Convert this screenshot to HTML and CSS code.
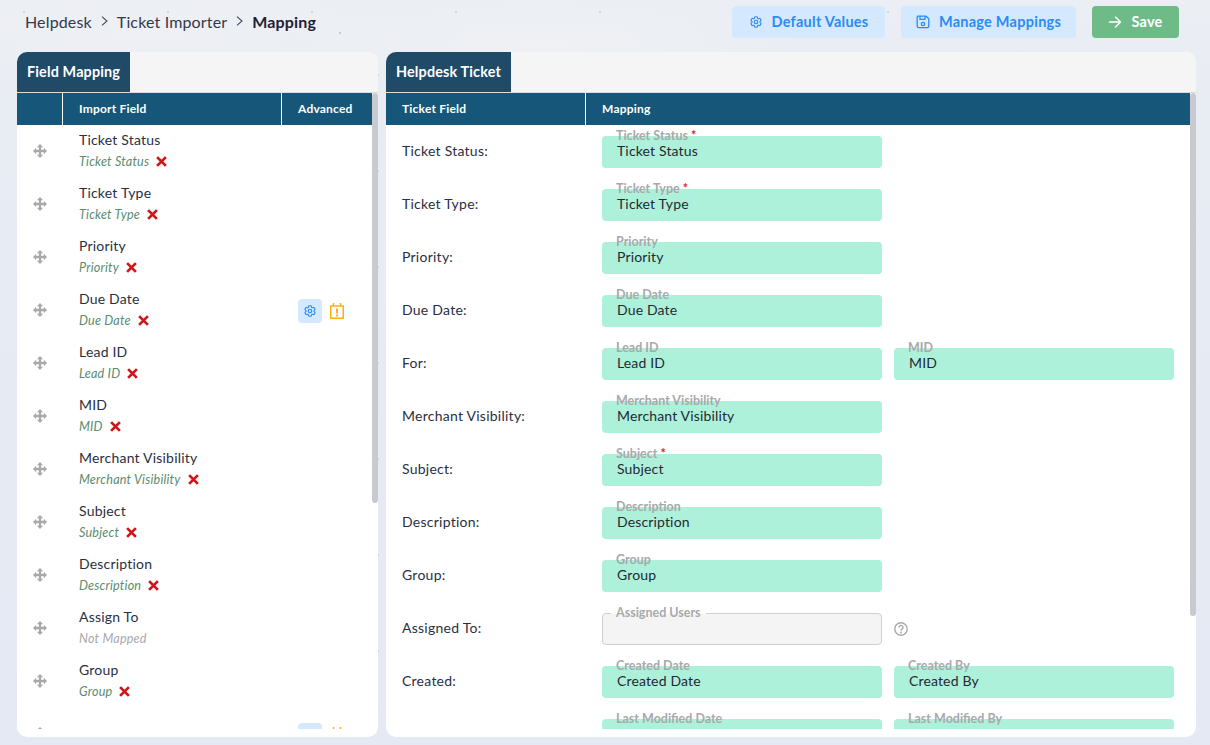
FILE: index.html
```html
<!DOCTYPE html>
<html lang="en">
<head>
<meta charset="utf-8">
<title>Mapping</title>
<link rel="stylesheet" href="styles.css">
</head>
<body>
<svg class="defs" width="0" height="0" aria-hidden="true">
  <symbol id="gear" viewBox="0 0 24 24"><path fill="none" stroke="currentColor" stroke-width="2" d="M9.594 3.94c.09-.542.56-.94 1.11-.94h2.593c.55 0 1.02.398 1.11.94l.213 1.281c.063.374.313.686.645.87.074.04.147.083.22.127.325.196.72.257 1.075.124l1.217-.456a1.125 1.125 0 0 1 1.37.49l1.296 2.247a1.125 1.125 0 0 1-.26 1.431l-1.003.827c-.293.241-.438.613-.43.992a7.723 7.723 0 0 1 0 .255c-.008.378.137.75.43.991l1.004.827c.424.35.534.955.26 1.43l-1.298 2.247a1.125 1.125 0 0 1-1.369.491l-1.217-.456c-.355-.133-.75-.072-1.076.124a6.47 6.47 0 0 1-.22.128c-.331.183-.581.495-.644.869l-.213 1.281c-.09.543-.56.94-1.11.94h-2.594c-.55 0-1.019-.398-1.11-.94l-.213-1.281c-.062-.374-.312-.686-.644-.87a6.52 6.52 0 0 1-.22-.127c-.325-.196-.72-.257-1.076-.124l-1.217.456a1.125 1.125 0 0 1-1.369-.49l-1.297-2.247a1.125 1.125 0 0 1 .26-1.431l1.004-.827c.292-.24.437-.613.43-.991a6.932 6.932 0 0 1 0-.255c.007-.38-.138-.751-.43-.992l-1.004-.827a1.125 1.125 0 0 1-.26-1.43l1.297-2.247a1.125 1.125 0 0 1 1.37-.491l1.216.456c.356.133.751.072 1.076-.124.072-.044.146-.086.22-.128.332-.183.582-.495.644-.869l.214-1.28Z"/><circle cx="12" cy="12" r="3" fill="none" stroke="currentColor" stroke-width="2"/></symbol>
  <symbol id="floppy" viewBox="0 0 14 14"><path fill="none" stroke="currentColor" stroke-width="1.3" d="M2 1.2h8l2.8 2.600v7.400a1.400 1.400 0 0 1-1.400 1.400H2.600a1.400 1.400 0 0 1-1.400-1.400V2a.8.8 0 0 1 .8-.8zM4 1.400v3h5v-3"/><circle cx="7" cy="9" r="1.700" fill="none" stroke="currentColor" stroke-width="1.300"/></symbol>
  <symbol id="arrow" viewBox="0 0 14 14"><path fill="none" stroke="currentColor" stroke-width="1.400" stroke-linecap="round" stroke-linejoin="round" d="M1.500 7h11M7.500 2l5 5-5 5"/></symbol>
  <symbol id="move" viewBox="0 0 16 16"><path fill="currentColor" d="M8 0l3.600 3.600H9.300v3.100h3.100V4.400L16 8l-3.600 3.600V9.300H9.300v3.100h2.300L8 16l-3.600-3.600h2.300V9.300H3.600v2.300L0 8l3.600-3.600v2.300h3.100V3.600H4.400z"/></symbol>
  <symbol id="cross" viewBox="0 0 10 10"><path fill="none" stroke="currentColor" stroke-width="2.500" d="M1 1l8 8M9 1L1 9"/></symbol>
  <symbol id="cal" viewBox="0 0 14 16"><path fill="none" stroke="currentColor" stroke-width="1.500" d="M.75 3h12.500v12.250H.75zM3.500 0v3M10.500 0v3"/><path fill="currentColor" d="M6 5.500h2v5H6zM6 11.500h2v2H6z"/></symbol>
  <symbol id="help" viewBox="0 0 14 14"><circle cx="7" cy="7" r="6.200" fill="none" stroke="currentColor" stroke-width="1.400"/><path fill="none" stroke="currentColor" stroke-width="1.400" d="M5 5.400a2 2 0 1 1 3 1.700c-.7.4-1 .8-1 1.600"/><circle cx="7" cy="10.500" r=".9" fill="currentColor"/></symbol>
  <symbol id="chev" viewBox="0 0 7 10"><path fill="none" stroke="currentColor" stroke-width="1.100" d="M1 .7L6 5 1 9.300"/></symbol>
</svg>

<header class="topbar">
  <nav class="crumbs">
    <span>Helpdesk</span><svg class="sep"><use href="#chev"/></svg><span>Ticket Importer</span><svg class="sep"><use href="#chev"/></svg><strong>Mapping</strong>
  </nav>
  <div class="actions">
    <button class="btn btn-soft btn-defaults"><svg class="btn-icon"><use href="#gear"/></svg>Default Values</button>
    <button class="btn btn-soft btn-manage"><svg class="btn-icon"><use href="#floppy"/></svg>Manage Mappings</button>
    <button class="btn btn-save"><svg class="btn-icon"><use href="#arrow"/></svg>Save</button>
  </div>
</header>

<main class="workspace">
  <section class="panel panel-left">
    <div class="tabstrip"><div class="tab">Field Mapping</div></div>
    <div class="panel-body">
      <div class="scroller">
        <div class="thead">
          <div class="th th-drag"></div>
          <div class="th th-import">Import Field</div>
          <div class="th th-adv">Advanced</div>
        </div>
        <div class="frow"><svg class="drag"><use href="#move"/></svg><div class="fcell"><div class="fname">Ticket Status</div><div class="fsub"><em>Ticket Status</em><svg class="x"><use href="#cross"/></svg></div></div></div>
        <div class="frow"><svg class="drag"><use href="#move"/></svg><div class="fcell"><div class="fname">Ticket Type</div><div class="fsub"><em>Ticket Type</em><svg class="x"><use href="#cross"/></svg></div></div></div>
        <div class="frow"><svg class="drag"><use href="#move"/></svg><div class="fcell"><div class="fname">Priority</div><div class="fsub"><em>Priority</em><svg class="x"><use href="#cross"/></svg></div></div></div>
        <div class="frow"><svg class="drag"><use href="#move"/></svg><div class="fcell"><div class="fname">Due Date</div><div class="fsub"><em>Due Date</em><svg class="x"><use href="#cross"/></svg></div></div><div class="advcell"><span class="gearbtn"><svg class="gearicon"><use href="#gear"/></svg></span><svg class="calicon"><use href="#cal"/></svg></div></div>
        <div class="frow"><svg class="drag"><use href="#move"/></svg><div class="fcell"><div class="fname">Lead ID</div><div class="fsub"><em>Lead ID</em><svg class="x"><use href="#cross"/></svg></div></div></div>
        <div class="frow"><svg class="drag"><use href="#move"/></svg><div class="fcell"><div class="fname">MID</div><div class="fsub"><em>MID</em><svg class="x"><use href="#cross"/></svg></div></div></div>
        <div class="frow"><svg class="drag"><use href="#move"/></svg><div class="fcell"><div class="fname">Merchant Visibility</div><div class="fsub"><em>Merchant Visibility</em><svg class="x"><use href="#cross"/></svg></div></div></div>
        <div class="frow"><svg class="drag"><use href="#move"/></svg><div class="fcell"><div class="fname">Subject</div><div class="fsub"><em>Subject</em><svg class="x"><use href="#cross"/></svg></div></div></div>
        <div class="frow"><svg class="drag"><use href="#move"/></svg><div class="fcell"><div class="fname">Description</div><div class="fsub"><em>Description</em><svg class="x"><use href="#cross"/></svg></div></div></div>
        <div class="frow"><svg class="drag"><use href="#move"/></svg><div class="fcell"><div class="fname">Assign To</div><div class="fsub fsub-none"><em>Not Mapped</em></div></div></div>
        <div class="frow"><svg class="drag"><use href="#move"/></svg><div class="fcell"><div class="fname">Group</div><div class="fsub"><em>Group</em><svg class="x"><use href="#cross"/></svg></div></div></div>
        <div class="frow"><svg class="drag"><use href="#move"/></svg><div class="fcell"><div class="fname">Created By</div></div><div class="advcell"><span class="gearbtn"><svg class="gearicon"><use href="#gear"/></svg></span><svg class="calicon"><use href="#cal"/></svg></div></div>
      </div>
      <div class="rail"><div class="thumb thumb-left"></div></div>
    </div>
  </section>

  <section class="panel panel-right">
    <div class="tabstrip"><div class="tab">Helpdesk Ticket</div></div>
    <div class="panel-body">
      <div class="scroller">
        <div class="thead">
          <div class="th th-ticket">Ticket Field</div>
          <div class="th th-mapping">Mapping</div>
        </div>
        <div class="mrow"><div class="mlabel">Ticket Status:</div><div class="chip"><span class="float">Ticket Status <i>*</i></span>Ticket Status</div></div>
        <div class="mrow"><div class="mlabel">Ticket Type:</div><div class="chip"><span class="float">Ticket Type <i>*</i></span>Ticket Type</div></div>
        <div class="mrow"><div class="mlabel">Priority:</div><div class="chip"><span class="float">Priority</span>Priority</div></div>
        <div class="mrow"><div class="mlabel">Due Date:</div><div class="chip"><span class="float">Due Date</span>Due Date</div></div>
        <div class="mrow"><div class="mlabel">For:</div><div class="chip"><span class="float">Lead ID</span>Lead ID</div><div class="chip"><span class="float">MID</span>MID</div></div>
        <div class="mrow"><div class="mlabel">Merchant Visibility:</div><div class="chip"><span class="float">Merchant Visibility</span>Merchant Visibility</div></div>
        <div class="mrow"><div class="mlabel">Subject:</div><div class="chip"><span class="float">Subject <i>*</i></span>Subject</div></div>
        <div class="mrow"><div class="mlabel">Description:</div><div class="chip"><span class="float">Description</span>Description</div></div>
        <div class="mrow"><div class="mlabel">Group:</div><div class="chip"><span class="float">Group</span>Group</div></div>
        <div class="mrow"><div class="mlabel">Assigned To:</div><div class="chip chip-empty"><span class="float float-notch">Assigned Users</span></div><svg class="help"><use href="#help"/></svg></div>
        <div class="mrow"><div class="mlabel">Created:</div><div class="chip"><span class="float">Created Date</span>Created Date</div><div class="chip"><span class="float">Created By</span>Created By</div></div>
        <div class="mrow"><div class="chip chip-first"><span class="float">Last Modified Date</span></div><div class="chip"><span class="float">Last Modified By</span></div></div>
      </div>
      <div class="rail"><div class="thumb thumb-right"></div></div>
    </div>
  </section>
</main>
</body>
</html>
```
FILE: styles.css
```css
* { box-sizing: border-box; }
html, body { margin: 0; height: 100%; }
body {
  width: 1210px;
  height: 745px;
  overflow: hidden;
  font-family: "Lato", "Noto Sans", sans-serif;
  font-size: 14px;
  letter-spacing: 0.15px;
  color: #1f2433;
  background-color: #e8ecf3;
  background-image:
    radial-gradient(circle at 340px 33px, #bfc3cb 0, #bfc3cb 0.6px, rgba(191,195,203,0) 1.3px),
    radial-gradient(circle at 24px 12px, #c8ccd3 0, #c8ccd3 0.5px, rgba(200,204,211,0) 1.2px),
    radial-gradient(circle at 90px 75px, #ccd0d7 0, #ccd0d7 0.5px, rgba(204,208,215,0) 1.2px),
    radial-gradient(ellipse 260px 50px at 45% 6%, #eff1f4 0, rgba(239,241,244,0) 100%),
    radial-gradient(ellipse 300px 60px at 12% 4%, #eef0f4 0, rgba(238,240,244,0) 100%),
    linear-gradient(#ebeef3 0, #e8ecf3 120px, #e4e9f3 745px);
  background-size: 400px 160px, 144px 96px, 144px 96px, auto, auto, auto;
}
.defs { position: absolute; }

.topbar {
  height: 52px;
  display: flex;
  align-items: flex-start;
  justify-content: space-between;
  padding: 6px 31px 0 25px;
}
.crumbs {
  display: flex;
  align-items: center;
  height: 30px;
  font-size: 16px;
  letter-spacing: 0.15px;
  color: #33394a;
}
.crumbs strong { font-weight: 700; color: #1d2233; }
.sep { width: 7px; height: 10px; margin: 0 9px 0 9px; color: #444a5a; flex: none; }
.actions { display: flex; gap: 16px; }
.btn {
  height: 32px;
  border: 0;
  border-radius: 4px;
  display: flex;
  align-items: center;
  justify-content: center;
  font: 700 14.500px "Lato", sans-serif;
  letter-spacing: 0.25px;
  padding: 0 0 1px;
}
.btn-soft { background: #d4e9ff; color: #2a8bf5; }
.btn-defaults { width: 153px; }
.btn-manage { width: 175px; }
.btn-save { width: 87px; background: #6fbb88; color: #fff; }
.btn-icon { width: 14px; height: 14px; margin-right: 9px; }

.workspace {
  display: flex;
  gap: 8px;
  padding-left: 17px;
}
.panel {
  height: 685px;
  background: #fff;
  border-radius: 10px;
  overflow: hidden;
  display: flex;
  flex-direction: column;
  padding-bottom: 8px;
}
.panel-left { width: 361px; }
.panel-right { width: 810px; }
.tabstrip {
  height: 41px;
  flex: none;
  background: #f5f5f5;
  border-bottom: 1px solid #dcdcdc;
  display: flex;
}
.tab {
  height: 40px;
  padding: 0 10px 2px;
  display: flex;
  align-items: center;
  background: #1f4a68;
  color: #fff;
  font-weight: 700;
  font-size: 14.400px;
}
.panel-body { flex: 1; min-height: 0; display: flex; }
.scroller { flex: 1; min-width: 0; overflow: hidden; }
.rail { width: 6px; flex: none; }
.thumb { background: #c9cacf; border-radius: 3px; }
.thumb-left { height: 410px; }
.thumb-right { height: 523px; }

.thead {
  height: 32px;
  display: flex;
  background: #165678;
  color: #fff;
  font-weight: 700;
  font-size: 12px;
  letter-spacing: 0.2px;
}
.th { display: flex; align-items: center; padding: 0 0 2px 16px; }
.th-drag { width: 45px; padding: 0; }
.th-import { width: 219px; border-left: 1px solid #fff; }
.th-adv { flex: 1; border-left: 1px solid #fff; }
.th-ticket { width: 199px; }
.th-mapping { flex: 1; border-left: 1px solid #fff; }

.frow {
  height: 53px;
  display: flex;
  align-items: center;
}
.drag { width: 14px; height: 14px; margin: -2px 32px 0 16px; color: #a9a9a9; flex: none; }
.fcell { width: 219px; flex: none; padding-bottom: 2px; }
.fname { font-size: 14px; line-height: 20px; letter-spacing: 0.2px; color: #2a2f3f; }
.fsub { display: flex; align-items: center; height: 20px; margin-top: 2px; font-size: 12.600px; letter-spacing: 0.2px; color: #5b8c6f; }
.fsub em { font-style: italic; }
.fsub-none { color: #a9a9ad; }
.x { width: 11px; height: 11px; margin-left: 7px; color: #d0161b; }
.advcell { display: flex; align-items: center; margin-top: 1px; }
.gearbtn {
  width: 24px; height: 24px;
  border-radius: 4px;
  background: #d4e9ff;
  color: #2a8bf5;
  display: flex; align-items: center; justify-content: center;
}
.gearicon { width: 14px; height: 14px; }
.calicon { width: 14px; height: 16px; margin-left: 8px; color: #fdb10f; }

.mrow {
  height: 53px;
  display: flex;
  align-items: center;
  gap: 12px;
}
.mlabel { width: 204px; flex: none; padding: 0 0 2px 16px; letter-spacing: 0.25px; color: #2a2f3f; }
.chip {
  position: relative;
  width: 280px;
  height: 32px;
  margin-top: 1px;
  background: #aef1da;
  border-radius: 4px;
  padding-left: 15px;
  line-height: 30px;
  color: #1f2a33;
}
.chip-first { margin-left: 216px; }
.float {
  position: absolute;
  left: 14px;
  top: -6px;
  font-size: 12.500px;
  line-height: 12px;
  font-weight: 700;
  letter-spacing: 0;
  color: #a8a9ab;
  white-space: nowrap;
}
.float i { color: #e5202e; font-style: normal; }
.chip-empty { background: #f4f4f4; border: 1px solid #cfcfcf; }
.float-notch {
  left: 8px;
  top: -7px;
  padding: 0 5px;
  background: linear-gradient(#fff 0, #fff 7px, rgba(255,255,255,0) 7px);
}
.help { width: 14px; height: 14px; color: #a9a9a9; margin-top: 1px; }
```
